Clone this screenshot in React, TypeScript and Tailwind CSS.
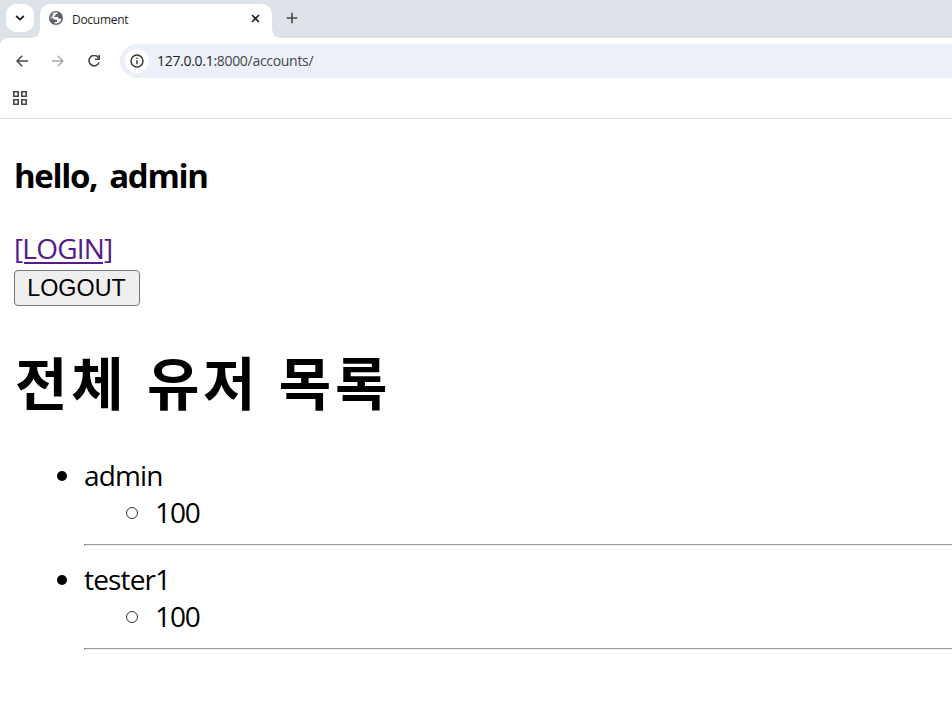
import React from "react";

function GlobeIcon() {
  return (
    <svg className="mt-[7px]" width="14" height="14" viewBox="0 0 14 14">
      <circle cx="7" cy="7" r="7" fill="#5f6368" />
      <path d="M8.6 1.5C8.9 2.6 8.3 3.1 7 3.2C6.5 3.9 6.3 4.5 5.4 4.9V6.1H8.2C9.2 6.1 9.2 7.7 10.1 7.7H12.5A5.6 5.6 0 0 1 5.6 12.4V11H7C7.8 11 8.1 10.4 8.1 9.7C8.1 8.9 7.5 8.5 6.8 8.5H5.2C4.6 8.5 4.4 7.2 3.6 7.2H1.4A5.6 5.6 0 0 1 8.6 1.5Z" fill="#fff" />
      <path d="M1.4 6.2A5.6 5.6 0 0 1 4.8 1.9C4.4 3.2 3.4 3.9 3.4 5.2L2.6 6.4Z" fill="#5f6368" />
    </svg>
  );
}

function TabStrip() {
  return (
    <div className="flex h-[38px] items-start bg-[#dde2e9] pl-[6px]">
      <button className="mt-1 flex h-7 w-7 items-center justify-center rounded-[10px] bg-white">
        <svg width="10" height="6" viewBox="0 0 10 6" fill="none" stroke="#1f1f1f" strokeWidth="1.8">
          <path d="M1.2 1 5 4.6 8.8 1" />
        </svg>
      </button>
      <svg className="mt-7 h-[10px] w-[6px] shrink-0 overflow-visible" viewBox="0 0 6 10">
        <path d="M6 0V10H-4Q6 10 6 0" fill="#fff" />
      </svg>
      <div className="mt-1 flex h-[34px] w-[232px] items-start rounded-t-[10px] bg-white pl-[9px]">
        <GlobeIcon />
        <span className="ml-[9px] mt-[7px] w-[172px] font-['Open_Sans','Noto_Sans',sans-serif] text-[12px] leading-[18px] tracking-[-0.28px] text-[#1f1f1f]">
          Document
        </span>
        <svg className="mt-[10px] ml-[7px]" width="9" height="9" viewBox="0 0 9 9" stroke="#1f1f1f" strokeWidth="1.6">
          <path d="m1 1 7 7M8 1 1 8" />
        </svg>
      </div>
      <svg className="mt-7 h-[10px] w-[10px]" viewBox="0 0 10 10">
        <path d="M0 0V10H10Q0 10 0 0" fill="#fff" />
      </svg>
      <svg className="ml-[4px] mt-[12px]" width="12" height="12" viewBox="0 0 12 12" stroke="#474747" strokeWidth="1.6">
        <path d="M6 .8V11.2M.8 6H11.2" />
      </svg>
    </div>
  );
}

function Toolbar() {
  return (
    <div className="h-[81px] border-b border-[#dfe1e5] bg-white">
      <div className="flex h-[46px] items-center pl-4">
        <svg width="12" height="12" viewBox="0 0 12 12" fill="none" stroke="#474747" strokeWidth="1.5">
          <path d="M12 6H1.2M6.2 .8 1 6 6.2 11.2" />
        </svg>
        <svg className="ml-6" width="12" height="12" viewBox="0 0 12 12" fill="none" stroke="#ababab" strokeWidth="1.5">
          <path d="M0 6H10.8M5.8 .8 11 6 5.8 11.2" />
        </svg>
        <svg className="ml-6" width="12" height="12" viewBox="0 0 12 12" fill="none" stroke="#474747" strokeWidth="1.6">
          <path d="M10.5 2.7A5.2 5.2 0 1 0 11.1 7.3M11.2 0V4.2H6.8" />
        </svg>
        <div className="ml-5 flex h-[34px] flex-1 items-center rounded-l-full bg-[#ebf0f9] pl-[5px]">
          <div className="flex h-6 w-6 items-center justify-center rounded-full bg-white">
            <svg width="14" height="14" viewBox="0 0 14 14" fill="none" stroke="#333" strokeWidth="1.4">
              <circle cx="7" cy="7" r="6" />
              <path d="M7 6.2V10.2M7 3.7V5" />
            </svg>
          </div>
          <span className="ml-2 font-['Open_Sans','Noto_Sans',sans-serif] text-[14px] leading-5 tracking-[-0.3px] text-[#474747]">
            <span className="text-[#1f1f1f]">127.0.0.1</span>:8000/accounts/
          </span>
        </div>
      </div>
      <svg className="ml-[13px] mt-[7px]" width="14" height="14" viewBox="0 0 14 14" fill="none" stroke="#474747" strokeWidth="1.6">
        <path d="M.8.8H5.2V5.2H.8ZM8.8.8H13.2V5.2H8.8ZM.8 8.8H5.2V13.2H.8ZM8.8 8.8H13.2V13.2H8.8Z" />
      </svg>
    </div>
  );
}

function User({ name }: { name: string }) {
  return (
    <li className="mb-[15px]">
      <div className="flex h-[37px] items-center">
        <span className="ml-[43px] mr-[17px] h-[10px] w-[10px] rounded-full bg-black" />
        <span className="tracking-[-0.85px]">{name}</span>
      </div>
      <ul>
        <li className="flex h-[37px] items-center">
          <span className="ml-[112px] mr-[17px] mt-px h-3 w-3 rounded-full border border-[#333]" />
          <span className="tracking-[-1.1px]">100</span>
        </li>
      </ul>
      <hr className="-mr-[14px] ml-[70px] mt-[13px] h-[2px] border-0 border-l border-t border-[#9a9a9a] bg-[#eeeeee]" />
    </li>
  );
}

export default function App() {
  return (
    <div className="h-[709px] overflow-hidden bg-white">
      <div className="bg-[#dde2e9]">
        <TabStrip />
        <div className="overflow-hidden rounded-tl-[8px]">
          <Toolbar />
        </div>
      </div>
      <main className="px-[14px] font-['Open_Sans','Noto_Sans','Noto_Sans_CJK_KR',sans-serif] text-[28px] leading-[37px] text-black">
        <h3 className="pt-[38px] text-[33px] font-bold leading-[38px] tracking-[-1.35px] [word-spacing:5px]">
          hello, admin
        </h3>
        <p className="mt-[35px] h-[40px] text-[#551a8b]">
          <a className="tracking-[-0.8px] underline decoration-2 underline-offset-[3px]">[LOGIN]</a>
        </p>
        <button className="block h-9 w-[126px] rounded-[4px] border border-[#767676] bg-[#efefef] pr-px text-center font-['Liberation_Sans',Arial,sans-serif] text-[23.333px] leading-[34px]">
          LOGOUT
        </button>
        <h1 className="mt-[37px] h-[74px] pl-px font-['Noto_Sans_CJK_KR',sans-serif] text-[57px] font-bold leading-[74px] tracking-[3.7px] [word-spacing:3px]">
          전체 유저 목록
        </h1>
        <ul className="mt-[40px]">
          <User name="admin" />
          <User name="tester1" />
        </ul>
      </main>
    </div>
  );
}
